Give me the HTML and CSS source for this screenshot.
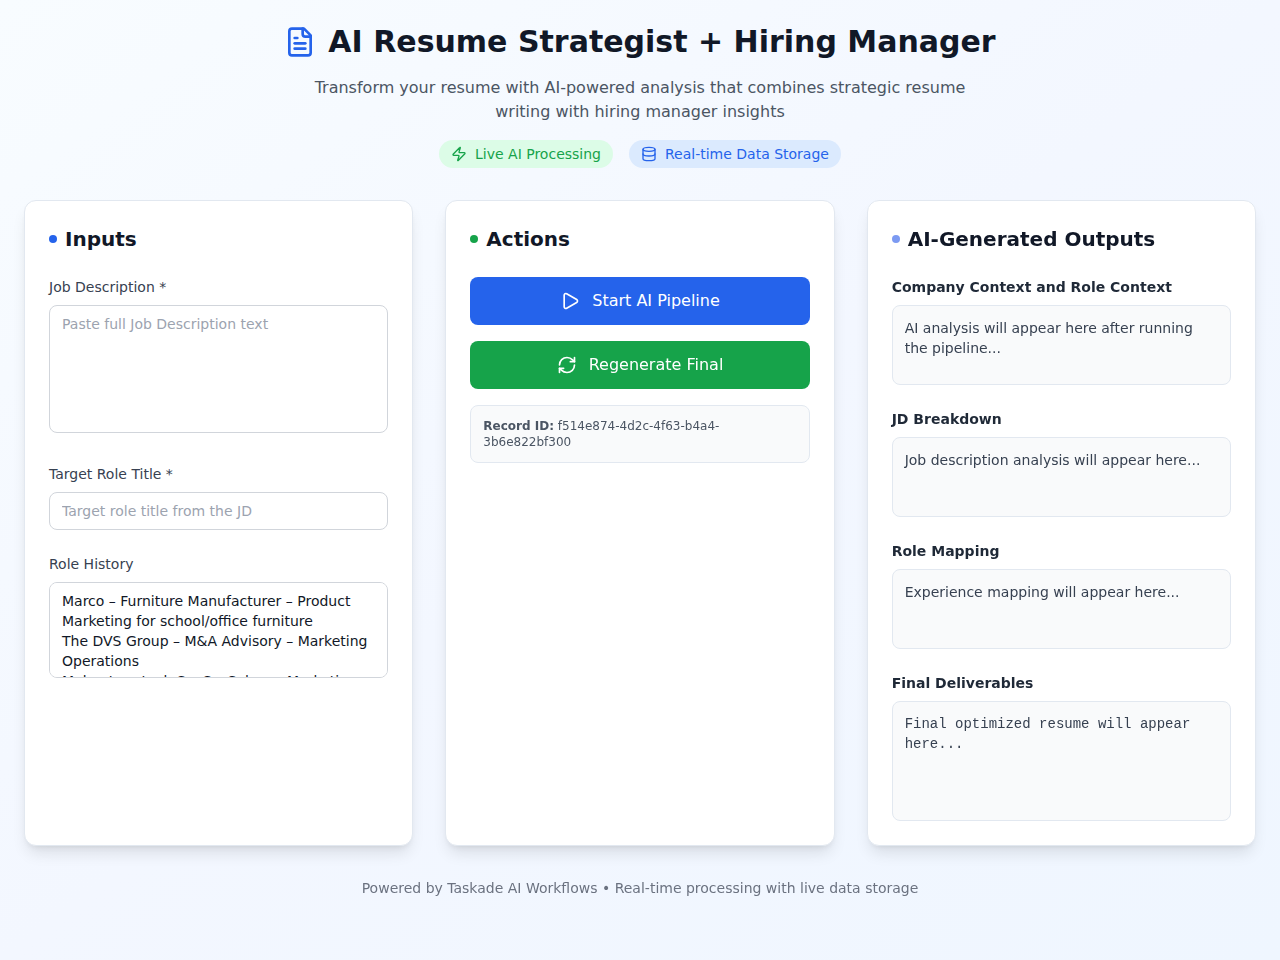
FILE: index.html
```html
<!DOCTYPE html>
<html lang="en">
<head>
<meta charset="utf-8">
<meta name="viewport" content="width=device-width, initial-scale=1">
<title>AI Resume Strategist + Hiring Manager</title>
<link rel="stylesheet" href="styles.css">
</head>
<body>
<div class="page">

	<header class="header">
		<div class="title_row">
			<svg class="icon icon_lg" viewBox="0 0 24 24"><path d="M15 2H6a2 2 0 0 0-2 2v16a2 2 0 0 0 2 2h12a2 2 0 0 0 2-2V7Z"/><path d="M14 2v4a2 2 0 0 0 2 2h4"/><path d="M10 9H8"/><path d="M16 13H8"/><path d="M16 17H8"/></svg>
			<h1>AI Resume Strategist + Hiring Manager</h1>
		</div>
		<p class="subtitle">Transform your resume with AI-powered analysis that combines strategic resume writing with hiring manager insights</p>
		<div class="badges">
			<span class="badge badge_green">
				<svg class="icon icon_sm" viewBox="0 0 24 24"><path d="M4 14a1 1 0 0 1-.78-1.63l9.9-10.2a.5.5 0 0 1 .86.46l-1.92 6.02A1 1 0 0 0 13 10h7a1 1 0 0 1 .78 1.63l-9.9 10.2a.5.5 0 0 1-.86-.46l1.92-6.02A1 1 0 0 0 11 14z"/></svg>
				Live AI Processing
			</span>
			<span class="badge badge_blue">
				<svg class="icon icon_sm" viewBox="0 0 24 24"><ellipse cx="12" cy="5" rx="9" ry="3"/><path d="M3 5v14a9 3 0 0 0 18 0V5"/><path d="M3 12a9 3 0 0 0 18 0"/></svg>
				Real-time Data Storage
			</span>
		</div>
	</header>

	<main class="columns">
		<section class="card">
			<h2><span class="dot dot_blue"></span>Inputs</h2>
			<form class="stack">
				<div>
					<label for="job_description">Job Description *</label>
					<textarea class="field field_tall" id="job_description" placeholder="Paste full Job Description text"></textarea>
				</div>
				<div>
					<label for="role_title">Target Role Title *</label>
					<input class="field" type="text" id="role_title" placeholder="Target role title from the JD">
				</div>
				<div>
					<label for="role_history">Role History</label>
					<textarea class="field field_short" id="role_history">Marco – Furniture Manufacturer – Product Marketing for school/office furniture
The DVS Group – M&amp;A Advisory – Marketing Operations
Maker-tron tech SaaS – Salem – Marketing</textarea>
				</div>
			</form>
		</section>

		<section class="card">
			<h2><span class="dot dot_green"></span>Actions</h2>
			<div class="actions">
				<button type="button" class="btn btn_blue">
					<svg class="icon icon_md" viewBox="0 0 24 24"><path d="M5 5a2 2 0 0 1 3.008-1.728l11.997 6.998a2 2 0 0 1 .003 3.458l-12 7A2 2 0 0 1 5 19z"/></svg>
					Start AI Pipeline
				</button>
				<button type="button" class="btn btn_green">
					<svg class="icon icon_md" viewBox="0 0 24 24"><path d="M3 12a9 9 0 0 1 9-9 9.75 9.75 0 0 1 6.74 2.74L21 8"/><path d="M21 3v5h-5"/><path d="M21 12a9 9 0 0 1-9 9 9.75 9.75 0 0 1-6.74-2.74L3 16"/><path d="M8 16H3v5"/></svg>
					Regenerate Final
				</button>
				<div class="record"><strong>Record ID:</strong> f514e874-4d2c-4f63-b4a4-3b6e822bf300</div>
			</div>
		</section>

		<section class="card">
			<h2><span class="dot dot_violet"></span>AI-Generated Outputs</h2>
			<div class="stack">
				<div>
					<h3>Company Context and Role Context</h3>
					<div class="output">AI analysis will appear here after running the pipeline...</div>
				</div>
				<div>
					<h3>JD Breakdown</h3>
					<div class="output">Job description analysis will appear here...</div>
				</div>
				<div>
					<h3>Role Mapping</h3>
					<div class="output">Experience mapping will appear here...</div>
				</div>
				<div>
					<h3>Final Deliverables</h3>
					<div class="output output_final">Final optimized resume will appear here...</div>
				</div>
			</div>
		</section>
	</main>

	<footer class="footer">Powered by Taskade AI Workflows • Real-time processing with live data storage</footer>

</div>
</body>
</html>
```

FILE: styles.css
```css
*{box-sizing:border-box;}
body{margin:0;font:16px/24px "DejaVu Sans", Verdana, sans-serif;color:#111827;}
h1,h2,h3,p{margin:0;}
.page{min-height:100vh;padding:24px;background:linear-gradient(to bottom right, #f8fcff, #f3f7ff 50%, #eff6ff);}

.icon{flex:none;fill:none;stroke:currentColor;stroke-width:2;stroke-linecap:round;stroke-linejoin:round;}
.icon_sm{width:16px;height:16px;}
.icon_md{width:20px;height:20px;}
.icon_lg{width:32px;height:32px;color:#2563eb;}

/* header */
.header{margin-bottom:32px;text-align:center;}
.title_row{display:flex;align-items:center;justify-content:center;gap:12px;margin-bottom:16px;}
h1{font-size:30px;line-height:36px;font-weight:bold;}
.subtitle{max-width:672px;margin:0 auto;color:#4b5563;}
.badges{display:flex;flex-wrap:wrap;justify-content:center;gap:16px;margin-top:16px;}
.badge{display:flex;align-items:center;gap:8px;padding:4px 12px;border-radius:14px;font-size:14px;line-height:20px;}
.badge_green{background:#dcfce7;color:#16a34a;}
.badge_blue{background:#dbeafe;color:#2563eb;}

/* cards */
.columns{display:grid;grid-template-columns:repeat(3, minmax(0, 1fr));gap:32px;}
.card{padding:24px;background:#fff;border:1px solid #e2e8f0;border-radius:12px;box-shadow:0 10px 15px -3px rgba(0,0,0,.1), 0 4px 6px -4px rgba(0,0,0,.1);}
h2{display:flex;align-items:center;gap:8px;margin-bottom:24px;font-size:20px;line-height:28px;}
.dot{width:8px;height:8px;border-radius:50%;}
.dot_blue{background:#2563eb;}
.dot_green{background:#16a34a;}
.dot_violet{background:#7c9af2;}
.stack{display:flex;flex-direction:column;gap:24px;}

/* inputs */
label{display:block;margin-bottom:8px;font-size:14px;line-height:20px;color:#374151;}
.field{width:100%;padding:8px 12px;border:1px solid #d1d5db;border-radius:8px;background:#fff;color:#111827;font:14px/20px "DejaVu Sans", Verdana, sans-serif;resize:none;scrollbar-width:none;}
.field::placeholder{color:#9ca3af;opacity:1;}
input.field{display:block;height:38px;}
.field_tall{height:128px;}
.field_short{height:96px;}

/* actions */
.actions{display:flex;flex-direction:column;gap:16px;}
.btn{display:flex;align-items:center;justify-content:center;gap:12px;padding:12px 16px;border:0;border-radius:8px;color:#fff;font:16px/24px "DejaVu Sans", Verdana, sans-serif;cursor:pointer;}
.btn_blue{background:#2563eb;}
.btn_green{background:#16a34a;}
.record{padding:12px;border:1px solid #e2e8f0;border-radius:8px;background:#f9fafb;color:#4b5563;font-size:12px;line-height:16px;}

/* outputs */
h3{margin-bottom:8px;font-size:14px;line-height:20px;color:#1f2937;}
.output{min-height:80px;padding:12px;border:1px solid #e2e8f0;border-radius:8px;background:#f9fafb;color:#374151;font-size:14px;line-height:20px;}
.output_final{min-height:120px;font-family:"Liberation Mono", monospace;}

.footer{margin-top:32px;text-align:center;font-size:14px;line-height:20px;color:#6b7280;}

@media (max-width:900px){
	.columns{grid-template-columns:1fr;}
}
```
